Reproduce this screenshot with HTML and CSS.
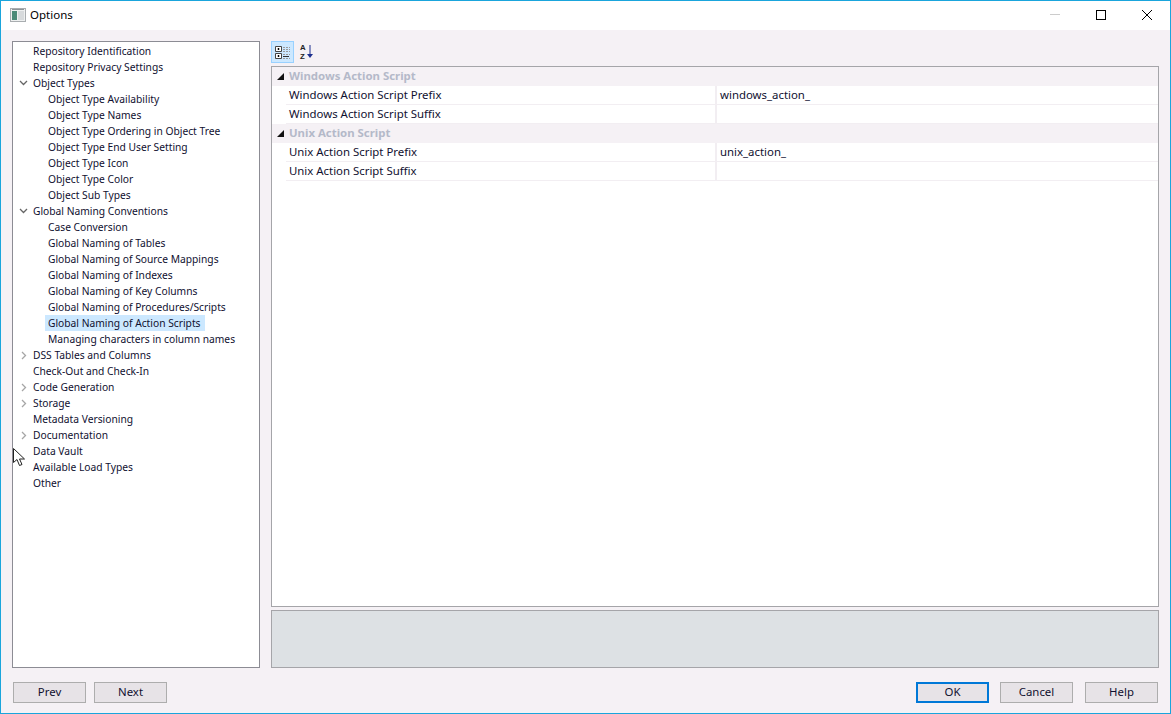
FILE: index.html
```html
<!DOCTYPE html>
<html lang="en">
<head>
    <meta charset="UTF-8">
    <title>Options</title>
    <link rel="stylesheet" href="styles.css">
</head>
<body>
    <div class="window">
        <div class="titlebar">
            <svg class="app-icon" width="16" height="14" viewBox="0 0 16 14">
                <rect x="0.5" y="0.5" width="15" height="13" fill="#eef0f0" stroke="#a9adb0"/>
                <rect x="2" y="3" width="5" height="9" fill="#4c8a78"/>
                <rect x="8" y="3" width="6" height="9" fill="#d7dadc"/>
                <rect x="2" y="1" width="12" height="1" fill="#8d9498"/>
            </svg>
            <span class="title">Options</span>
            <div class="win-buttons">
                <svg width="12" height="12" viewBox="0 0 12 12"><path d="M1 5.500h10" stroke="#ccc" fill="none"/></svg>
                <svg width="12" height="12" viewBox="0 0 12 12"><rect x="1.500" y="1.500" width="9" height="9" stroke="#000" fill="none"/></svg>
                <svg width="12" height="12" viewBox="0 0 12 12"><path d="M1 1l10 10M11 1L1 11" stroke="#000" fill="none"/></svg>
            </div>
        </div>
        <div class="content">
            <div class="main">
                <ul class="tree">
                    <li class="top">Repository Identification</li>
                    <li class="top">Repository Privacy Settings</li>
                    <li class="top"><svg class="twist" width="9" height="6" viewBox="0 0 9 6"><path d="M1 1l3.500 3.500L8 1" stroke="#666" stroke-width="1.300" fill="none"/></svg>Object Types</li>
                    <li class="sub">Object Type Availability</li>
                    <li class="sub">Object Type Names</li>
                    <li class="sub">Object Type Ordering in Object Tree</li>
                    <li class="sub">Object Type End User Setting</li>
                    <li class="sub">Object Type Icon</li>
                    <li class="sub">Object Type Color</li>
                    <li class="sub">Object Sub Types</li>
                    <li class="top"><svg class="twist" width="9" height="6" viewBox="0 0 9 6"><path d="M1 1l3.500 3.500L8 1" stroke="#666" stroke-width="1.300" fill="none"/></svg>Global Naming Conventions</li>
                    <li class="sub">Case Conversion</li>
                    <li class="sub">Global Naming of Tables</li>
                    <li class="sub">Global Naming of Source Mappings</li>
                    <li class="sub">Global Naming of Indexes</li>
                    <li class="sub">Global Naming of Key Columns</li>
                    <li class="sub">Global Naming of Procedures/Scripts</li>
                    <li class="sub"><span class="selected">Global Naming of Action Scripts</span></li>
                    <li class="sub">Managing characters in column names</li>
                    <li class="top"><svg class="twist closed" width="6" height="9" viewBox="0 0 6 9"><path d="M1 1l3.500 3.500L1 8" stroke="#a6a6a6" stroke-width="1.300" fill="none"/></svg>DSS Tables and Columns</li>
                    <li class="top">Check-Out and Check-In</li>
                    <li class="top"><svg class="twist closed" width="6" height="9" viewBox="0 0 6 9"><path d="M1 1l3.500 3.500L1 8" stroke="#a6a6a6" stroke-width="1.300" fill="none"/></svg>Code Generation</li>
                    <li class="top"><svg class="twist closed" width="6" height="9" viewBox="0 0 6 9"><path d="M1 1l3.500 3.500L1 8" stroke="#a6a6a6" stroke-width="1.300" fill="none"/></svg>Storage</li>
                    <li class="top">Metadata Versioning</li>
                    <li class="top"><svg class="twist closed" width="6" height="9" viewBox="0 0 6 9"><path d="M1 1l3.500 3.500L1 8" stroke="#a6a6a6" stroke-width="1.300" fill="none"/></svg>Documentation</li>
                    <li class="top">Data Vault</li>
                    <li class="top">Available Load Types</li>
                    <li class="top">Other</li>
                </ul>
                <div class="right">
                    <div class="toolbar">
                        <div class="tool active">
                            <svg width="15" height="15" viewBox="0 0 15 15">
                                <path d="M0.500 1.500h6v5h-6zM0.500 8.500h6v5h-6z" fill="#fff" stroke="#444"/>
                                <path d="M2.500 4h2M3.500 3v2M2.500 11h2M3.500 10v2" stroke="#000" fill="none"/>
                                <path d="M8 2.500h7M8 4.500h7M8 6.500h7M8 9.500h7M8 13.500h7" stroke="#9a9a9a" stroke-dasharray="2 1" fill="none"/>
                                <path d="M8 11.500h6" stroke="#333" fill="none"/>
                            </svg>
                        </div>
                        <div class="tool sort">
                            <span class="az">A<br>Z</span>
                            <svg width="6" height="16" viewBox="0 0 6 16"><path d="M3 1v10" stroke="#1d2f8f" fill="none"/><path d="M0 10h6l-3 4z" fill="#1d2f8f"/></svg>
                        </div>
                    </div>
                    <div class="grid">
                        <div class="category"><i class="arrow"></i>Windows Action Script</div>
                        <div class="row"><div class="name">Windows Action Script Prefix</div><div class="value">windows_action_</div></div>
                        <div class="row"><div class="name">Windows Action Script Suffix</div><div class="value"></div></div>
                        <div class="category"><i class="arrow"></i>Unix Action Script</div>
                        <div class="row"><div class="name">Unix Action Script Prefix</div><div class="value">unix_action_</div></div>
                        <div class="row"><div class="name">Unix Action Script Suffix</div><div class="value"></div></div>
                    </div>
                    <div class="description"></div>
                </div>
            </div>
            <div class="footer">
                <div class="btn-group">
                    <button class="btn">Prev</button>
                    <button class="btn">Next</button>
                </div>
                <div class="btn-group end">
                    <button class="btn default">OK</button>
                    <button class="btn">Cancel</button>
                    <button class="btn help">Help</button>
                </div>
            </div>
        </div>
        <svg class="cursor" width="13" height="20" viewBox="0 0 13 20">
            <path d="M0.500 0.500v14l3.500-3 2.500 6 2.500-1-2.500-5.500h5z" fill="#fff" stroke="#222"/>
        </svg>
    </div>
</body>
</html>
```

FILE: styles.css
```css
* {
    box-sizing: border-box;
}
html, body {
    margin: 0;
    height: 100%;
}
body {
    font-family: "Noto Sans", "Open Sans", sans-serif;
    font-size: 11.4px;
    color: #000;
}
.window {
    position: relative;
    height: 714px;
    display: flex;
    flex-direction: column;
    border: 1px solid #1aa5dc;
    background-color: #f5f1f5;
}

/* title bar */
.titlebar {
    height: 29px;
    flex: none;
    display: flex;
    align-items: center;
    background-color: #fff;
    padding-left: 9px;
    padding-bottom: 1px;
}
.app-icon {
    margin-right: 4px;
}
.title {
    font-size: 11.5px;
    margin-bottom: 1px;
}
.win-buttons {
    margin-left: auto;
    display: flex;
    gap: 34px;
    padding-right: 17px;
}

/* main area */
.content {
    flex: 1;
    display: flex;
    flex-direction: column;
    padding: 11px 11px 10px 11px;
}
.main {
    flex: 1;
    display: flex;
    gap: 11px;
}
.tree {
    width: 248px;
    height: 627px;
    margin: 0;
    padding: 1px 0 0 0;
    list-style: none;
    background-color: #fff;
    border: 1px solid #8c8c94;
    font-size: 10.25px;
}
.tree li {
    position: relative;
    height: 16px;
    line-height: 16px;
    white-space: nowrap;
    color: #101030;
}
.tree .top {
    padding-left: 20px;
}
.tree .sub {
    padding-left: 35px;
}
.twist {
    position: absolute;
    left: 6px;
    top: 5px;
}
.twist.closed {
    left: 8px;
    top: 4px;
}
.selected {
    display: inline-block;
    margin-left: -3px;
    padding: 0 4px 0 3px;
    background-color: #cce8ff;
}

/* right side */
.right {
    flex: 1;
    display: flex;
    flex-direction: column;
}
.toolbar {
    height: 25px;
    display: flex;
    gap: 3px;
    align-items: flex-start;
}
.tool {
    width: 23px;
    height: 22px;
    display: flex;
    align-items: center;
    justify-content: center;
}
.tool.active {
    background-color: #cce8ff;
    border: 1px solid #99d1ff;
}
.tool.sort {
    justify-content: flex-start;
    padding-left: 3px;
    gap: 1px;
}
.az {
    font-family: "Liberation Sans", sans-serif;
    font-size: 7.8px;
    line-height: 9px;
    font-weight: 700;
    color: #222;
}
.grid {
    height: 541px;
    background-color: #fff;
    border: 1px solid #a5a5a9;
}
.category {
    position: relative;
    height: 19px;
    line-height: 18px;
    padding-left: 17px;
    font-weight: 700;
    color: #b4b9c9;
    background-color: #f5f1f5;
}
.arrow {
    position: absolute;
    left: 5px;
    top: 6px;
    width: 0;
    height: 0;
    border-left: 7px solid transparent;
    border-bottom: 7px solid #111;
}
.row {
    display: flex;
    height: 19px;
    margin-left: 14px;
    line-height: 17px;
    border-bottom: 1px solid #f2eef2;
    color: #101030;
}
.name {
    width: 431px;
    flex: none;
    padding-left: 3px;
    border-right: 2px solid #f2eef2;
}
.value {
    flex: 1;
    padding-left: 3px;
}
.description {
    height: 58px;
    margin-top: 3px;
    background-color: #dde1e4;
    border: 1px solid #a5a5a9;
}

/* bottom buttons */
.footer {
    height: 21px;
    flex: none;
    margin-top: 13px;
    padding: 0 1px;
    display: flex;
    justify-content: space-between;
}
.btn-group {
    display: flex;
    gap: 8px;
}
.btn-group.end {
    gap: 11px;
}
.btn {
    width: 73px;
    height: 21px;
    padding: 0 0 2px 0;
    font-family: inherit;
    font-size: 11.4px;
    color: #101030;
    background-color: #e7e3e7;
    border: 1px solid #adadad;
}
.btn.default {
    border: 2px solid #0078d7;
}
.btn.help {
    margin-left: 1px;
}
.cursor {
    position: absolute;
    left: 12px;
    top: 447px;
}
```
